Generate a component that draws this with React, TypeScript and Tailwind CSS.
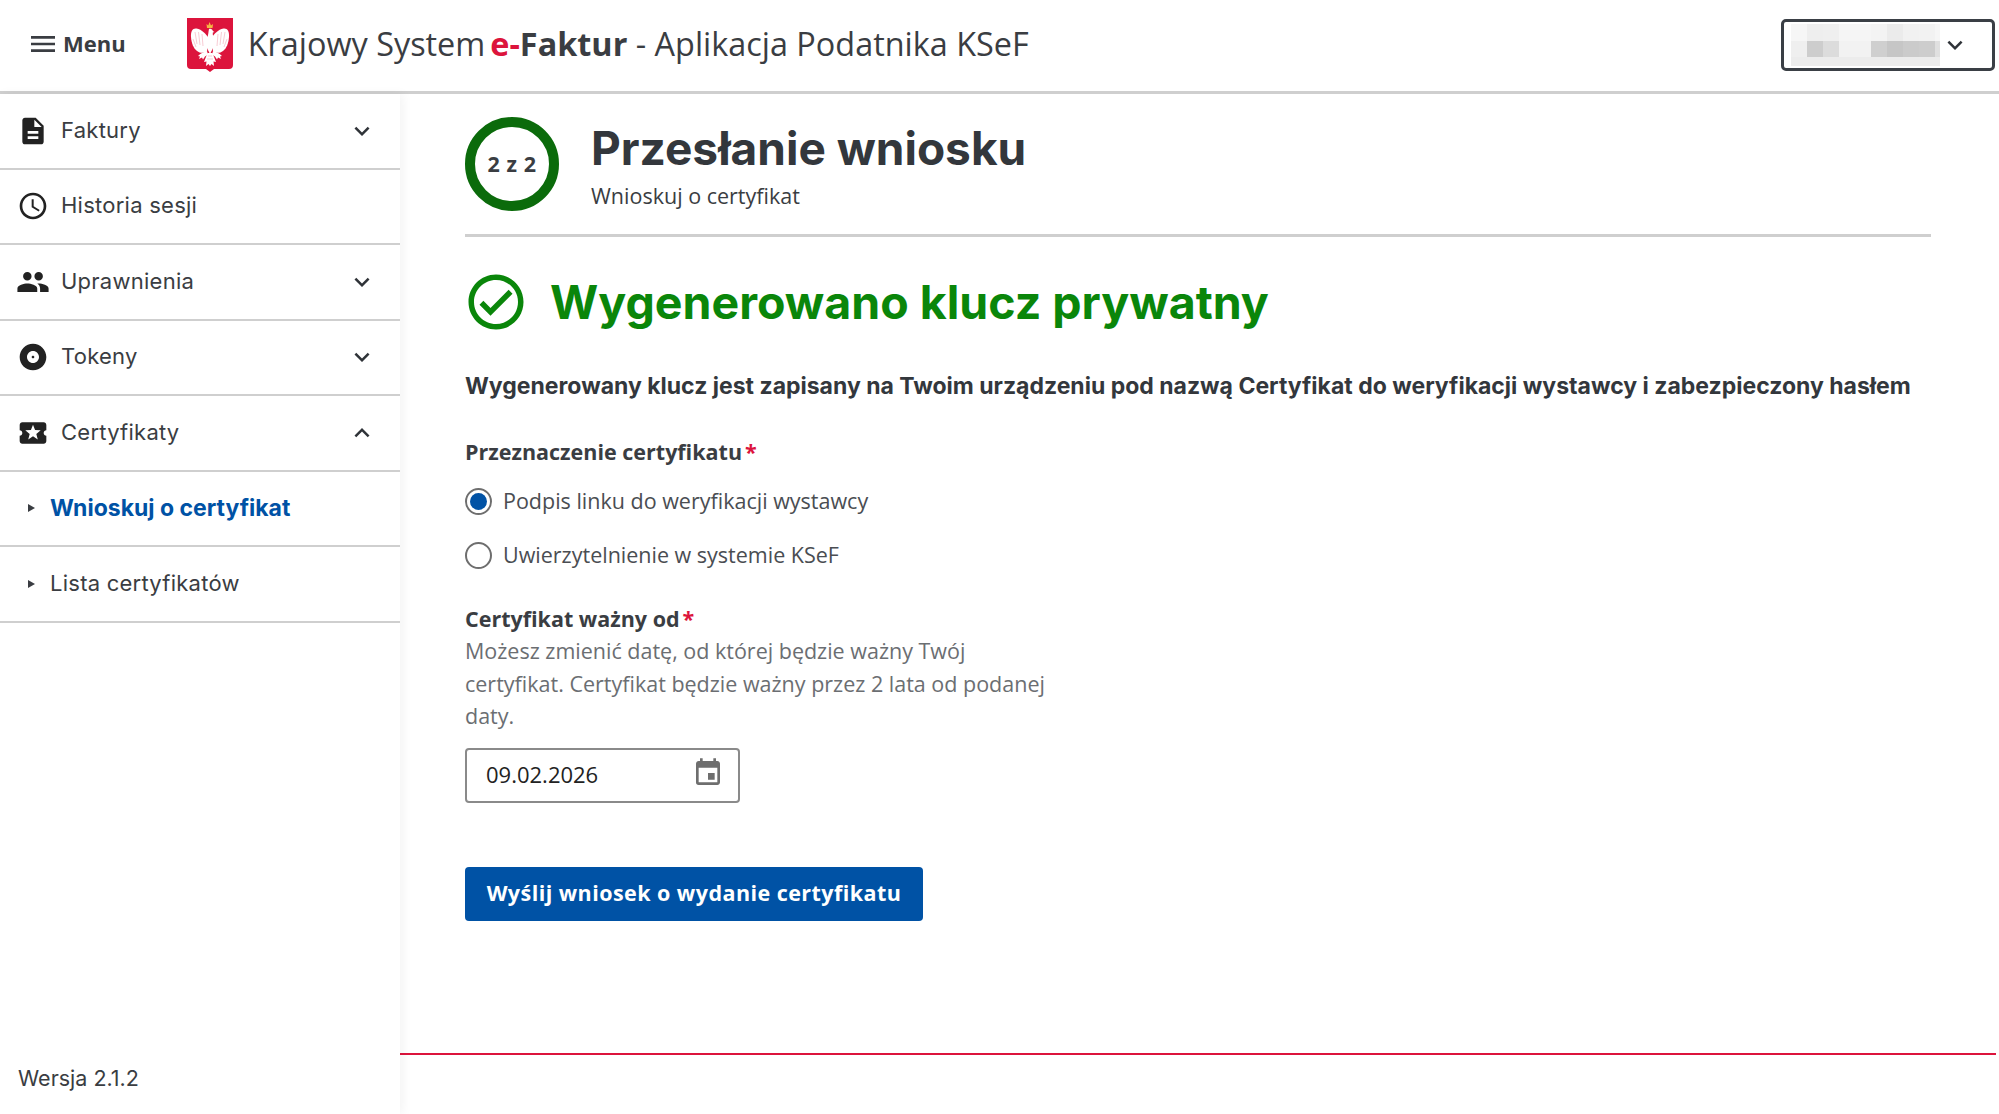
import {
  MdAccessTime,
  MdAlbum,
  MdDescription,
  MdEvent,
  MdExpandLess,
  MdExpandMore,
  MdLocalActivity,
  MdMenu,
  MdOutlineCheckCircle,
  MdPeople,
} from "react-icons/md";

const menuFont = "font-['Inter','Liberation_Sans',sans-serif]";

function EagleHalf() {
  return (
    <>
      <path d="M21.5 20C19 16 15 11.5 9.5 10.5 5.5 10 3.6 13.5 4 19c.5 6 2.2 11 6 14 3.200 2.400 6.500 2.400 10 .5Z" fill="#fff" />
      <path d="M8 14l2 12M11.500 14l1.500 13M15 16l1 12M6 21l3 8" stroke="#f3b6c2" strokeWidth="0.7" fill="none" />
      <path d="M20 33c-3 1-6 2-9 5l2 .5-1 2.500 3-1.500 1 2 2-3 3-2Z" fill="#fff" />
    </>
  );
}

function Emblem() {
  return (
    <svg viewBox="0 0 46 54" className="w-[46px] h-[54px] shrink-0">
      <path d="M0 0H46V47a4 4 0 0 1-4 4H27l-4 3-4-3H4a4 4 0 0 1-4-4Z" fill="#dc143c" />
      <path d="M20 10l-.5-4 1.800 1.500L22.500 4l1.500 3.500L26 6l-.5 4Z" fill="#f5b942" />
      <EagleHalf />
      <g transform="matrix(-1 0 0 1 46 0)">
        <EagleHalf />
      </g>
      <path d="M22 11c1.800-.8 3.600.2 3.800 2l1.700 1-1.700.5c-.2 1.500 0 3 .7 4.500 1 3 .8 8-.5 11L23 36l-3-6c-1-3-1-7.500.5-11 .8-2 .8-5 1.500-8Z" fill="#fff" />
      <path d="M20.500 35l-3.500 9 2.500-.5L19 48l2.500-2 1.500 2 1.500-2 2.500 2-.5-4.500 2.500.5-3.500-9Z" fill="#fff" />
      <path d="M21 38h4M20 41h6" stroke="#f3b6c2" strokeWidth="0.7" />
    </svg>
  );
}

function SideItem({
  icon,
  label,
  expanded,
  hasChildren,
}: {
  icon: React.ReactNode;
  label: string;
  expanded?: boolean;
  hasChildren?: boolean;
}) {
  return (
    <div className="h-[75.5px] border-b-2 border-[#cfcfcf] flex items-center pl-[12px] pr-[23px]">
      <div className="w-[42px] flex justify-center text-[#222]">{icon}</div>
      <span className="ml-[7px] -mt-[1px] text-[22px] tracking-[0.25px] text-[#3a3d42] flex-1">{label}</span>
      {hasChildren &&
        (expanded ? (
          <MdExpandLess className="text-[#2f3338]" size={30} />
        ) : (
          <MdExpandMore className="text-[#2f3338]" size={30} />
        ))}
    </div>
  );
}

function SubItem({ label, active }: { label: string; active?: boolean }) {
  return (
    <div className="h-[75.5px] border-b-2 border-[#cfcfcf] flex items-center pl-[28px]">
      <svg viewBox="0 0 7 8" className="w-[7px] h-[8px] fill-[#3a3d42]">
        <path d="M0 0 7 4 0 8Z" />
      </svg>
      <span
        className={`ml-[15px] -mt-[1px] ${active ? "text-[23px] font-bold text-[#0052a5]" : "text-[22px] tracking-[0.25px] text-[#3a3d42]"}`}
      >
        {label}
      </span>
    </div>
  );
}

function Radio({ label, checked }: { label: string; checked?: boolean }) {
  return (
    <div className="flex items-center h-[26px]">
      <div className="w-[27px] h-[27px] rounded-full border-2 border-[#6e6e6e] bg-white flex items-center justify-center">
        {checked && <div className="w-[17px] h-[17px] rounded-full bg-[#0052a5]" />}
      </div>
      <span className="ml-[11px] text-[21.5px] text-[#4a4d52]">{label}</span>
    </div>
  );
}

function Required() {
  return <span className="text-[#dc143c] ml-[3px]">*</span>;
}

// pixelated placeholder for the hidden account name
function BlurredName() {
  const top = ["#f6f6f6", "#eeeeee", "#efefef", "#f5f5f5", "#f5f5f5", "#f3f3f3", "#ebebeb", "#f1f1f1", "#f2f2f2", "#f6f6f6"];
  const middle = ["#efefef", "#cdcdcd", "#dcdcdc", "#f2f2f2", "#f2f2f2", "#cfcfcf", "#c6c6c6", "#cbcbcb", "#cdcdcd", "#e0e0e0"];
  return (
    <div className="w-[149px] flex flex-col">
      <div className="flex h-[17px]">
        {top.map((color, i) => (
          <div key={i} className={i === 9 ? "w-[5px]" : "w-[16px]"} style={{ backgroundColor: color }} />
        ))}
      </div>
      <div className="flex h-[16px]">
        {middle.map((color, i) => (
          <div key={i} className={i === 9 ? "w-[5px]" : "w-[16px]"} style={{ backgroundColor: color }} />
        ))}
      </div>
      <div className="h-[9px] bg-[#ececec]" />
    </div>
  );
}

export default function App() {
  return (
    <div className="h-[1114px] overflow-hidden bg-white flex flex-col font-['Open_Sans',sans-serif] text-[#3a3d42]">
      <header className="h-[94px] shrink-0 border-b-[3px] border-[#cfcfcf] flex items-center pl-[27px] pr-[4px] pb-[2px]">
        <MdMenu size={32} className="text-[#3a3d42] -mt-[1px]" />
        <span className="ml-[4px] -mt-[2px] text-[22px] font-bold">Menu</span>
        <div className="ml-[61px] flex items-center">
          <Emblem />
        </div>
        <div className="ml-[15px] -mt-[2px] text-[32.4px] whitespace-nowrap">
          Krajowy System
          <span className="font-bold ml-[5px]">
            <span className="text-[#dc143c]">e-</span>Faktur
          </span>{" "}
          - Aplikacja Podatnika KSeF
        </div>
        <div className="ml-auto w-[214px] h-[52px] border-[3px] border-[#3a3f45] rounded-[5px] flex items-center pl-[7px] pr-[22px] justify-between">
          <BlurredName />
          <MdExpandMore size={30} className="text-[#2f3338]" />
        </div>
      </header>

      <div className="flex-1 flex min-h-0">
        <aside className={`w-[400px] shrink-0 relative z-10 bg-white shadow-[3px_0_10px_rgba(0,0,0,0.05)] flex flex-col ${menuFont}`}>
          <SideItem icon={<MdDescription size={32} />} label="Faktury" hasChildren />
          <SideItem icon={<MdAccessTime size={32} />} label="Historia sesji" />
          <SideItem icon={<MdPeople size={34} />} label="Uprawnienia" hasChildren />
          <SideItem icon={<MdAlbum size={32} />} label="Tokeny" hasChildren />
          <SideItem icon={<MdLocalActivity size={32} />} label="Certyfikaty" hasChildren expanded />
          <SubItem label="Wnioskuj o certyfikat" active />
          <SubItem label="Lista certyfikatów" />
          <div className="mt-auto pl-[18px] pb-[20px] text-[21.5px] text-[#3a3d42]">Wersja 2.1.2</div>
        </aside>

        <main className="flex-1 flex flex-col min-w-0">
          <div className="flex-1 pl-[65px] pr-[68px] pt-[23px]">
            <div className="flex items-center gap-[32px] pb-[23px] border-b-[3px] border-[#cfcfcf]">
              <div className="w-[94px] h-[94px] rounded-full border-[10px] border-[#0b6b0b] flex items-center justify-center text-[21.5px] font-bold tracking-[0.6px]">
                2 z 2
              </div>
              <div className="flex flex-col pt-[3px]">
                <h1 className={`text-[46px] leading-[56px] font-bold text-[#33373c] ${menuFont}`}>Przesłanie wniosku</h1>
                <p className="text-[21.5px] leading-[30px] mt-[5px]">Wnioskuj o certyfikat</p>
              </div>
            </div>

            <div className="mt-[32px] flex items-center">
              <MdOutlineCheckCircle size={66} className="text-[#0a860a] -ml-[2px]" />
              <h2 className={`ml-[21px] text-[46.5px] leading-[56px] font-bold text-[#0a860a] ${menuFont}`}>Wygenerowano klucz prywatny</h2>
            </div>

            <p className={`mt-[35px] text-[23px] leading-[32px] font-bold text-[#33373c] whitespace-nowrap ${menuFont}`}>
              Wygenerowany klucz jest zapisany na Twoim urządzeniu pod nazwą Certyfikat do weryfikacji wystawcy i zabezpieczony hasłem
            </p>

            <div className="mt-[34px] text-[21.5px] leading-[32px] font-bold">
              Przeznaczenie certyfikatu
              <Required />
            </div>
            <div className="mt-[20px] flex flex-col gap-[28px]">
              <Radio label="Podpis linku do weryfikacji wystawcy" checked />
              <Radio label="Uwierzytelnienie w systemie KSeF" />
            </div>

            <div className="mt-[35px] text-[21.5px] leading-[32px] font-bold">
              Certyfikat ważny od
              <Required />
            </div>
            <p className="w-[590px] text-[21.5px] leading-[32.5px] text-[#6b6e72]">
              Możesz zmienić datę, od której będzie ważny Twój certyfikat. Certyfikat będzie ważny przez 2 lata od podanej daty.
            </p>

            <div className="mt-[15px] w-[275px] h-[55px] border-2 border-[#8a8a8a] rounded-[4px] flex items-center justify-between pl-[19px] pr-[14px]">
              <span className="text-[22px] -mt-[1px] text-[#222]">09.02.2026</span>
              <MdEvent size={32} className="text-[#6e6e6e] -mt-[5px]" />
            </div>

            <button className="mt-[64px] h-[54px] w-[458px] rounded-[4px] bg-[#0052a5] text-white text-[21.5px] font-bold tracking-[0.45px]">
              Wyślij wniosek o wydanie certyfikatu
            </button>
          </div>
          <footer className="h-[61px] shrink-0 mr-[3px] border-t-2 border-[#dc143c]" />
        </main>
      </div>
    </div>
  );
}
